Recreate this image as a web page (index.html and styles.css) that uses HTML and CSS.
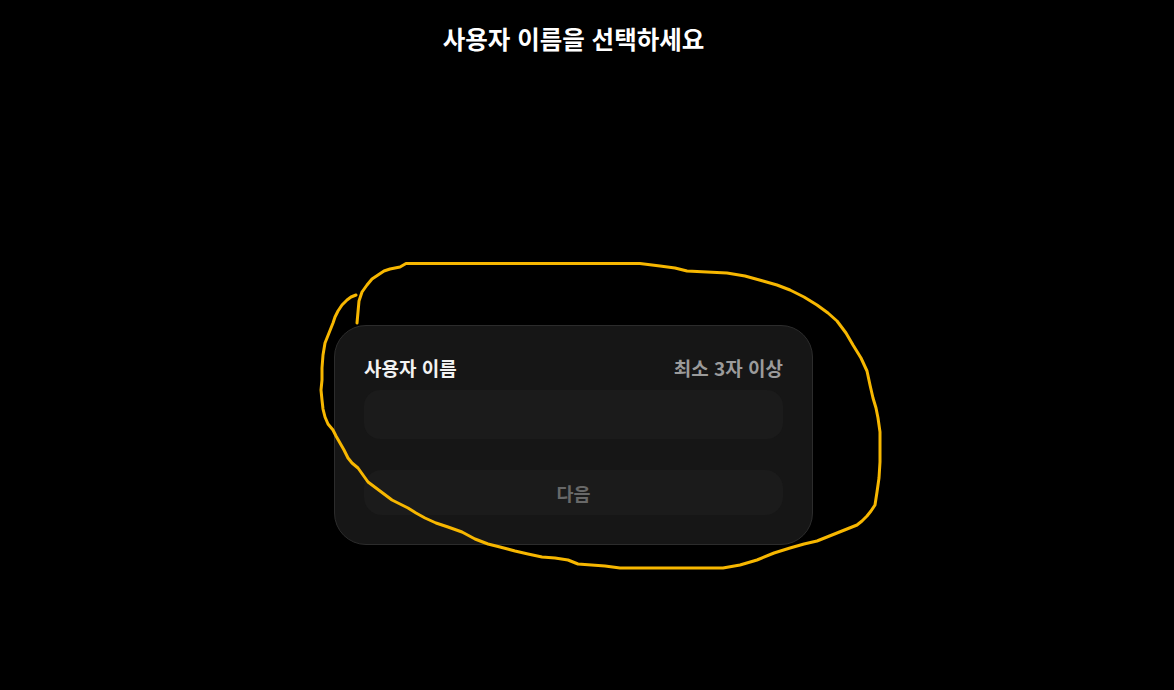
FILE: index.html
```html
<!DOCTYPE html>
<html lang="ko">
<head>
<meta charset="utf-8">
<title>사용자 이름을 선택하세요</title>
<link rel="stylesheet" href="styles.css">
</head>
<body>
<main class="page">
  <h1 class="title">사용자 이름을 선택하세요</h1>
  <section class="card">
    <div class="label-row">
      <label class="label" for="username">사용자 이름</label>
      <span class="hint">최소 3자 이상</span>
    </div>
    <input class="field" id="username" type="text" aria-label="사용자 이름">
    <button class="next" type="button" disabled>다음</button>
  </section>
</main>
<svg class="scribble" width="1174" height="690" viewBox="0 0 1174 690" aria-hidden="true">
  <path d="M357,323 L358,312 L359,301 L362,292 L367,285 L372,279 L378,275 L384,271 L390,269 L400,267 L406,263.5 L640,263.5 L660,266 L675,268 L687,271 L707,272 L727,273 L745,276 L763,281 L777,285 L790,290 L804,297 L817,305 L828,313 L837,321 L846,333 L853,345 L861,358 L867,371 L870,385 L873,398 L876,408 L878,418 L880,432 L880,445 L880,462 L879,478 L877,492 L875,505 L871,511 L867,516 L862,521 L857,525 L847,529 L837,533 L827,537 L817,541 L804,544 L790,548 L774,553 L757,560 L740,565 L723,568 L670,568 L620,568 L605,566 L578,564 L568,560 L555,558 L542,557 L528,554 L515,551 L500,547 L488,544 L475,539 L462,532 L448,527 L436,523 L425,518 L416,513 L408,508 L400,504 L392,500 L380,491 L368,482 L363,475 L358,468 L352,463 L348,458 L344,450 L340,443 L336,436 L333,430 L328,424 L325,417 L323,409 L322,400 L321,390 L322,380 L322,368 L323,355 L325,343 L329,333 L333,323 L335,317 L338,311 L342,305 L347,300 L351,297 L356,295"/>
</svg>
</body>
</html>
```

FILE: styles.css
```css
html, body {
  margin: 0;
  padding: 0;
  background: #000;
  height: 100%;
  overflow: hidden;
}

body {
  font-family: "Noto Sans CJK KR", "Noto Sans", sans-serif;
  color: #fff;
}

.page {
  display: flex;
  flex-direction: column;
  align-items: center;
  padding-right: 27px;
}

.title {
  margin: 0;
  padding-top: 23px;
  font-size: 24.5px;
  line-height: 32px;
  font-weight: 700;
  color: #fff;
}

.card {
  box-sizing: border-box;
  width: 479px;
  margin-top: 270px;
  padding: 29px 29px 29px;
  background: #161616;
  border: 1px solid #2c2c2c;
  border-radius: 32px;
  display: flex;
  flex-direction: column;
}

.label-row {
  display: flex;
  justify-content: space-between;
  align-items: center;
  height: 24px;
}

.label {
  font-size: 19px;
  font-weight: 700;
  color: #f2f2f2;
}

.hint {
  font-size: 19px;
  font-weight: 700;
  color: #9b9b9b;
}

.field {
  box-sizing: border-box;
  margin-top: 11px;
  height: 49px;
  width: 100%;
  border: none;
  outline: none;
  border-radius: 16px;
  background: #1b1b1b;
  color: #fff;
  font: inherit;
  padding: 0 16px;
}

.next {
  margin-top: 31px;
  height: 45px;
  width: 100%;
  border: none;
  border-radius: 18px;
  background: #1b1b1b;
  color: #686868;
  font-family: inherit;
  font-size: 18.5px;
  font-weight: 700;
}

.scribble {
  position: absolute;
  left: 0;
  top: 0;
  pointer-events: none;
}

.scribble path {
  fill: none;
  stroke: #f7b700;
  stroke-width: 3;
  stroke-linejoin: round;
  stroke-linecap: round;
}
```
